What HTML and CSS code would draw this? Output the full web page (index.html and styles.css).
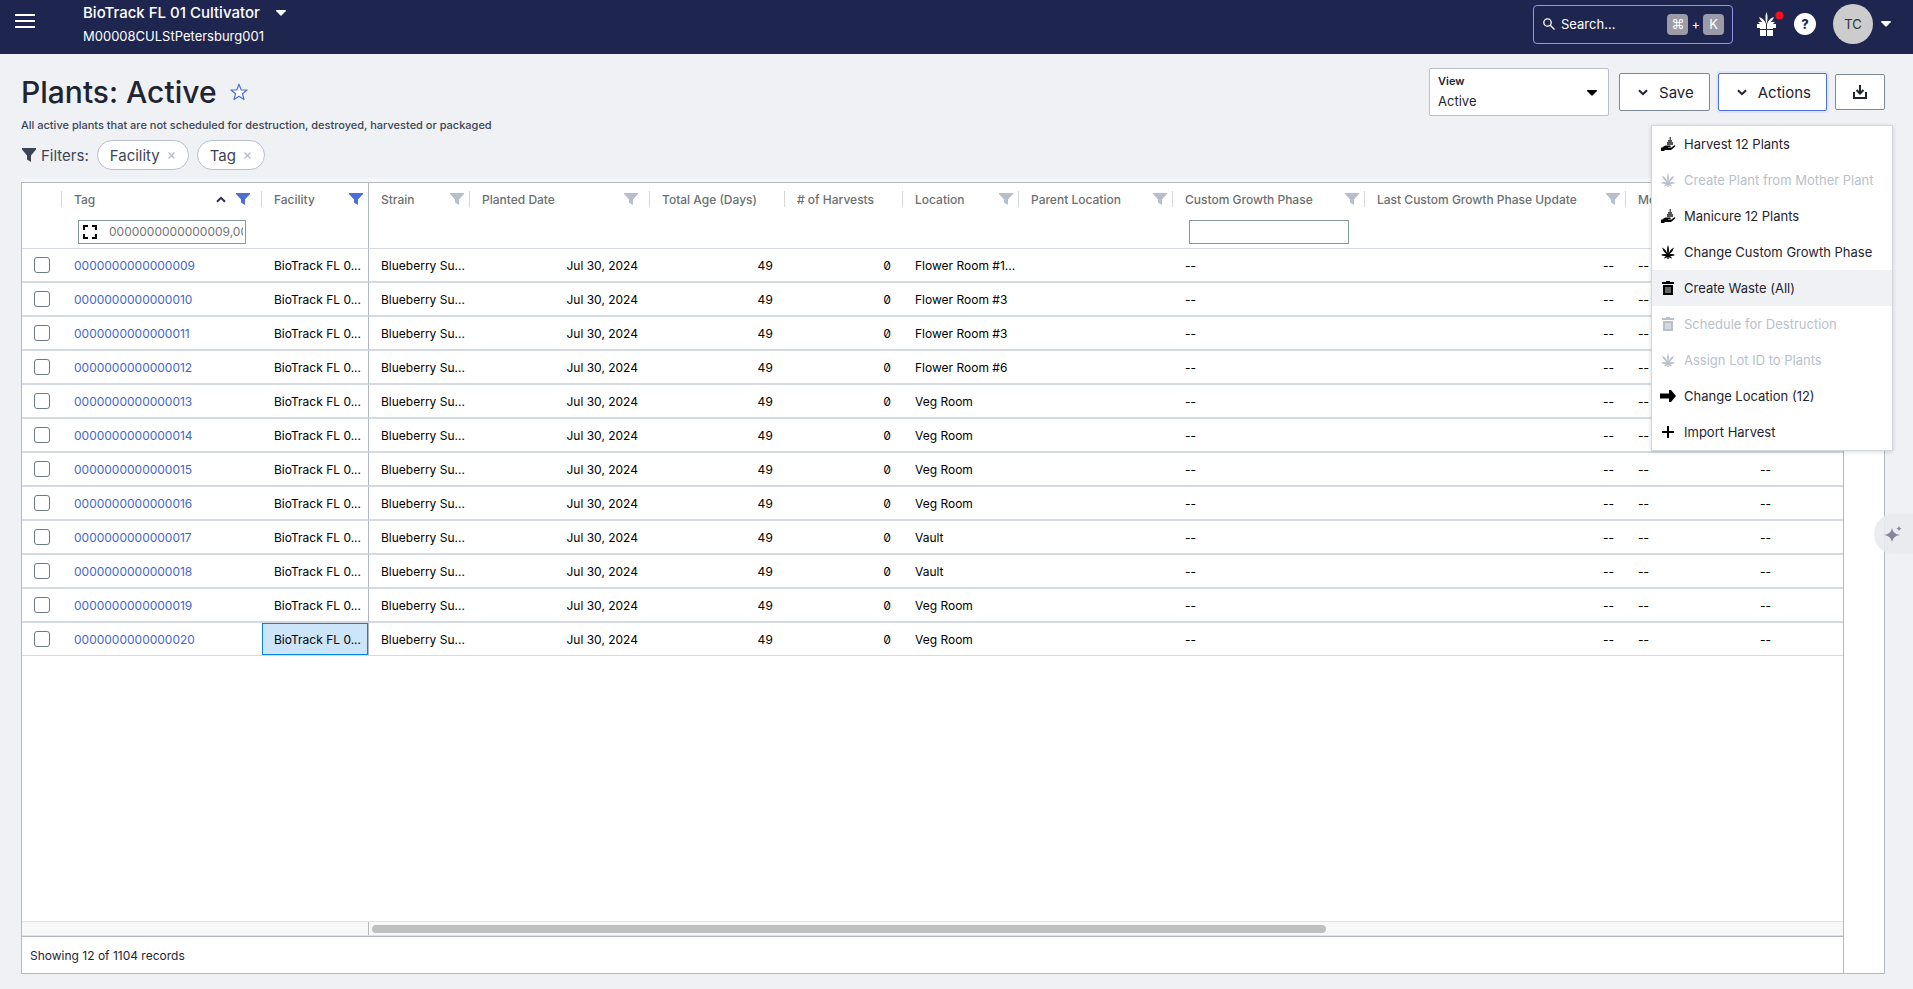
FILE: index.html
```html
<!DOCTYPE html>
<html lang="en">
<head>
    <meta charset="UTF-8">
    <meta name="viewport" content="width=device-width, initial-scale=1.0">
    <title>Plants: Active</title>
    <link rel="stylesheet" href="styles.css">
</head>
<body>
    <!-- shared icons -->
    <svg class="sprite" width="0" height="0" aria-hidden="true">
        <symbol id="i-caret" viewBox="0 0 10 6"><path d="M.5 0h9q.8.4.1 1.2L5.8 5.3q-.8.8-1.6 0L.4 1.2Q-.3.4.5 0z"/></symbol>
        <symbol id="i-chevron" viewBox="0 0 10 7"><path d="M1 1.2 5 5.2 9 1.2" fill="none" stroke="currentColor" stroke-width="2"/></symbol>
        <symbol id="i-filter" viewBox="0 0 14 12"><path d="M0 0h14v1L9 6.500V12L5 9.500V6.500L0 1z"/></symbol>
        <symbol id="i-hand" viewBox="0 0 16 16"><path d="M9.500 1h1.500v3h1v2h1v3H7V6h1V4h1.500z" fill="#555"/><path d="M1 11.500h1.500C4 10 5 9.500 6.500 9.500H10c1 0 1 1.500 0 1.500H8v.6h3.500L14 9.500c1-.7 1.700.3 1 1.100l-3 2.700c-.5.5-1 .7-1.700.7H5l-1 1H1z"/></symbol>
        <symbol id="i-leaf" viewBox="0 0 16 16"><path d="M8 1q1.600 3.500.6 8.500Q10.500 5 14 3.500 13 8 9.500 10.300q3-1 5.500.7-2.500 1.600-5 .9 1.500.9 1.900 2.600-2-.2-3.200-1.600V15H7.300v-2.100Q6 14.300 4.100 14.500q.4-1.700 1.900-2.600-2.500.7-5-.9 2.500-1.700 5.500-.7Q3 8 2 3.500 5.500 5 7.400 9.500 6.400 4.500 8 1z"/></symbol>
        <symbol id="i-trash" viewBox="0 0 16 16"><path d="M2 2h4V1h4v1h4v2H2zM3 5h10v10H3z"/><path d="M6 7v6M8 7v6M10 7v6" stroke="#fff" stroke-width=".8"/></symbol>
        <symbol id="i-arrow" viewBox="0 0 16 16"><path d="M0 5.500h9V2h2l5 6-5 6H9v-3.500H0z"/></symbol>
        <symbol id="i-plus" viewBox="0 0 16 16"><path d="M7 2h2v5h5v2H9v5H7V9H2V7h5z"/></symbol>
    </svg>

    <header class="topbar">
        <button class="icon-btn burger" aria-label="Menu"><svg width="20" height="14" viewBox="0 0 20 14"><path d="M0 1h20M0 7h20M0 13h20" stroke="#fff" stroke-width="2"/></svg></button>
        <div class="org">
            <button class="org-name">BioTrack FL 01 Cultivator <svg width="10" height="6"><use href="#i-caret"/></svg></button>
            <div class="org-id">M00008CULStPetersburg001</div>
        </div>
        <div class="search">
            <svg width="12" height="12" viewBox="0 0 12 12"><g fill="none" stroke="#fff" stroke-width="1.300"><circle cx="4.500" cy="4.500" r="3.700"/><path d="M7.200 7.200 11.500 11.500"/></g></svg>
            <input type="text" placeholder="Search..." aria-label="Search">
            <kbd>⌘</kbd><span>+</span><kbd>K</kbd>
        </div>
        <button class="icon-btn gift" aria-label="What's new">
            <svg width="27" height="26" viewBox="0 0 27 26">
                <g fill="#fff"><path d="M0 13h19v4H0zM3 19h6v6H3zM10 19h6v6h-6zM3 17h13v1H3z"/><path d="M9.500 1q2 5 0 12-2-7 0-12zM2 6q5 1.500 7 7-5.500-2-7-7zM17 6q-5 1.500-7 7 5.500-2 7-7zM1 11q4-1 8 2H3z M18 11q-4-1-8 2h6z"/></g>
                <path d="M9.500 13v12" stroke="#1e2650" stroke-width="1"/>
                <circle cx="22.500" cy="4.500" r="4" fill="#f8101c"/>
            </svg>
        </button>
        <button class="icon-btn help" aria-label="Help">?</button>
        <button class="icon-btn account"><span class="avatar">TC</span><svg width="10" height="6"><use href="#i-caret"/></svg></button>
    </header>

    <main>
        <div class="page-head">
            <div class="heading">
                <div class="title-row">
                    <h1>Plants: Active</h1>
                    <button class="icon-btn" aria-label="Favorite"><svg width="18" height="18" viewBox="0 0 18 18"><path d="M9 1.200 11.100 6.800 17 7 12.400 10.700 14 16.500 9 13.200 4 16.500 5.600 10.700 1 7 6.900 6.800z" fill="#fff" stroke="#4a6fd8" stroke-width="1.200" stroke-linejoin="round"/></svg></button>
                </div>
                <p class="desc">All active plants that are not scheduled for destruction, destroyed, harvested or packaged</p>
                <div class="filters">
                    <svg width="14" height="14" viewBox="0 0 14 14"><path d="M0 0h14v1.500L9 7.500V14l-4-2.500v-4L0 1.500z"/></svg>
                    <span class="filters-label">Filters:</span>
                    <button class="pill">Facility <svg width="7" height="7" viewBox="0 0 7 7"><path d="M.5.5l6 6M6.500.5l-6 6" stroke="#b5bcc8" stroke-width="1.300"/></svg></button>
                    <button class="pill">Tag <svg width="7" height="7" viewBox="0 0 7 7"><path d="M.5.5l6 6M6.500.5l-6 6" stroke="#b5bcc8" stroke-width="1.300"/></svg></button>
                </div>
            </div>
            <div class="tools">
                <div class="view">
                    <label for="view">View</label>
                    <select id="view"><option>Active</option></select>
                    <svg width="10" height="6"><use href="#i-caret"/></svg>
                </div>
                <button class="btn save"><svg width="10" height="7"><use href="#i-chevron"/></svg>Save</button>
                <div class="actions">
                    <button class="btn open"><svg width="10" height="7"><use href="#i-chevron"/></svg>Actions</button>
                    <div class="menu">
                        <button><svg><use href="#i-hand"/></svg>Harvest 12 Plants</button>
                        <button disabled><svg><use href="#i-leaf"/></svg>Create Plant from Mother Plant</button>
                        <button><svg><use href="#i-hand"/></svg>Manicure 12 Plants</button>
                        <button><svg><use href="#i-leaf"/></svg>Change Custom Growth Phase</button>
                        <button class="active"><svg><use href="#i-trash"/></svg>Create Waste (All)</button>
                        <button disabled><svg><use href="#i-trash"/></svg>Schedule for Destruction</button>
                        <button disabled><svg><use href="#i-leaf"/></svg>Assign Lot ID to Plants</button>
                        <button><svg><use href="#i-arrow"/></svg>Change Location (12)</button>
                        <button><svg><use href="#i-plus"/></svg>Import Harvest</button>
                    </div>
                </div>
                <button class="btn download" aria-label="Download"><svg width="16" height="16" viewBox="0 0 16 16"><path d="M2 8v6h12V8M8 1v8M4.500 6 8 9.500 11.500 6" fill="none" stroke="#1f2430" stroke-width="2"/></svg></button>
            </div>
        </div>

        <section class="panel">
            <div class="grid">
                <div class="grid-view">
                    <table>
                        <thead>
                            <tr class="names">
                                <th class="c-check"></th>
                                <th class="c-tag"><div class="head wide"><span>Tag</span><svg class="sort" width="10" height="7"><use href="#i-chevron"/></svg><svg class="on" width="14" height="12"><use href="#i-filter"/></svg></div></th>
                                <th class="c-facility pin"><div class="head"><span>Facility</span><svg class="on" width="14" height="12"><use href="#i-filter"/></svg></div></th>
                                <th class="c-strain"><div class="head"><span>Strain</span><svg width="14" height="12"><use href="#i-filter"/></svg></div></th>
                                <th class="c-planted"><div class="head wide"><span>Planted Date</span><svg width="14" height="12"><use href="#i-filter"/></svg></div></th>
                                <th class="c-age"><div class="head"><span>Total Age (Days)</span></div></th>
                                <th class="c-harvests"><div class="head"><span># of Harvests</span></div></th>
                                <th class="c-location"><div class="head"><span>Location</span><svg width="14" height="12"><use href="#i-filter"/></svg></div></th>
                                <th class="c-parent"><div class="head"><span>Parent Location</span><svg width="14" height="12"><use href="#i-filter"/></svg></div></th>
                                <th class="c-phase"><div class="head"><span>Custom Growth Phase</span><svg width="14" height="12"><use href="#i-filter"/></svg></div></th>
                                <th class="c-update"><div class="head"><span>Last Custom Growth Phase Update</span><svg width="14" height="12"><use href="#i-filter"/></svg></div></th>
                                <th class="c-mother"><div class="head"><span>Mother</span></div></th>
                                <th class="c-last"></th>
                            </tr>
                            <tr class="inputs">
                                <td></td>
                                <td><div class="filter-box">
                                    <svg width="14" height="14" viewBox="0 0 14 14"><path d="M1 5V1h4M9 1h4v4M13 9v4H9M5 13H1V9" fill="none" stroke="#000" stroke-width="2"/></svg>
                                    <input type="text" aria-label="Tag filter" placeholder="0000000000000009,0000000000000010">
                                </div></td>
                                <td class="pin"></td>
                                <td></td><td></td><td></td><td></td><td></td><td></td>
                                <td><div class="filter-box"><input type="text" aria-label="Custom Growth Phase filter"></div></td>
                                <td></td><td></td><td></td>
                            </tr>
                        </thead>
                        <tbody id="rows"></tbody>
                    </table>
                </div>
                <div class="scroll"><div class="scroll-pin"></div><div class="scroll-track"><div class="thumb"></div></div></div>
                <div class="status">Showing 12 of 1104 records</div>
            </div>
        </section>
    </main>

    <button class="assist" aria-label="Assistant"><svg width="20" height="20" viewBox="0 0 20 20"><path d="M9 3q1 6 8 7-7 1-8 7-1-6-8-7 7-1 8-7zM16 1q.5 2 2.500 2.500Q16.500 4 16 6q-.5-2-2.500-2.500Q15.500 3 16 1z"/></svg></button>

    <script>
        // [location, last column]
        const plants = [
            ['Flower Room #1...', ''],
            ['Flower Room #3', ''],
            ['Flower Room #3', ''],
            ['Flower Room #6', ''],
            ['Veg Room', ''],
            ['Veg Room', ''],
            ['Veg Room', '--'],
            ['Veg Room', '--'],
            ['Vault', '--'],
            ['Vault', '--'],
            ['Veg Room', '--'],
            ['Veg Room', '--']
        ];
        const rows = document.getElementById('rows');

        plants.forEach(([location, last], i) => {
            const tag = String(i + 9).padStart(16, '0');
            const selected = i === plants.length - 1 ? ' selected' : '';
            rows.insertAdjacentHTML('beforeend', `
                <tr>
                    <td class="check"><input type="checkbox" aria-label="Select ${tag}"></td>
                    <td><a href="#">${tag}</a></td>
                    <td class="pin${selected}">BioTrack FL 0...</td>
                    <td>Blueberry Su...</td>
                    <td class="num">Jul 30, 2024</td>
                    <td class="num mono">49</td>
                    <td class="num mono">0</td>
                    <td>${location}</td>
                    <td></td>
                    <td>--</td>
                    <td class="num">--</td>
                    <td>--</td>
                    <td>${last}</td>
                </tr>`);
        });
    </script>
</body>
</html>
```
FILE: styles.css
```css
* {
    box-sizing: border-box;
}
body {
    margin: 0;
    height: 100vh;
    display: flex;
    flex-direction: column;
    background: #eff1f5;
    color: #1f2430;
    font-family: Inter, "Liberation Sans", sans-serif;
    font-size: 13px;
    overflow: hidden;
}
button, input, select {
    font: inherit;
    color: inherit;
}
button {
    cursor: pointer;
}
svg {
    flex: none;
    fill: currentColor;
}
.sprite {
    position: absolute;
}
.icon-btn {
    display: flex;
    align-items: center;
    padding: 0;
    border: 0;
    background: none;
}

/* top bar */
.topbar {
    display: flex;
    align-items: center;
    height: 54px;
    flex: none;
    padding: 0 22px 6px 15px;
    background: #1e2650;
    color: #fff;
}
.burger {
    margin-right: 48px;
    padding-bottom: 6px;
}
.org {
    margin-right: auto;
}
.org-name {
    display: flex;
    align-items: center;
    gap: 16px;
    padding: 0;
    border: 0;
    background: none;
    font-size: 15px;
    font-weight: 500;
    line-height: 24px;
}
.org-id {
    line-height: 22px;
}
.search {
    display: flex;
    align-items: center;
    gap: 3px;
    width: 200px;
    height: 39px;
    padding: 0 8px 0 9px;
    border: 1px solid #9297ee;
    border-radius: 4px;
}
.search input {
    flex: 1;
    min-width: 0;
    padding: 0 0 0 3px;
    border: 0;
    outline: 0;
    background: none;
}
.search input::placeholder {
    color: #fff;
    opacity: 1;
}
kbd {
    width: 21px;
    height: 21px;
    border-radius: 4px;
    background: #9c9ca8;
    font-family: Inter, "DejaVu Sans", sans-serif;
    line-height: 21px;
    text-align: center;
}
.gift {
    margin-left: 24px;
}
.help {
    justify-content: center;
    width: 22px;
    height: 22px;
    margin-left: 10px;
    border-radius: 50%;
    background: #fff;
    color: #1e2650;
    font-weight: 800;
}
.account {
    gap: 8px;
    margin-left: 17px;
}
.avatar {
    width: 40px;
    height: 40px;
    border-radius: 50%;
    background: #ccc;
    color: #333;
    line-height: 40px;
}

/* page heading */
main {
    flex: 1;
    min-height: 0;
    display: flex;
    flex-direction: column;
    padding: 14px 28px 15px 21px;
}
.page-head {
    display: flex;
    justify-content: space-between;
    margin-bottom: 12px;
}
.title-row {
    display: flex;
    align-items: center;
    gap: 13px;
    height: 48px;
}
h1 {
    margin: 0;
    font-size: 30px;
    font-weight: 500;
}
.desc {
    margin: 0;
    color: #3c4454;
    font-size: 11px;
    font-weight: 500;
    line-height: 18px;
}
.filters {
    display: flex;
    align-items: center;
    gap: 8px;
    margin-top: 6px;
    padding-left: 1px;
    color: #3c4454;
    font-size: 15px;
}
.filters-label {
    margin-left: -3px;
}
.pill {
    display: flex;
    align-items: center;
    gap: 8px;
    height: 30px;
    padding: 0 13px 0 12px;
    border: 1px solid #b9c0cc;
    border-radius: 15px;
    background: #fff;
}
.tools {
    display: flex;
    align-items: center;
    align-self: flex-start;
    height: 48px;
}
.view {
    position: relative;
    display: flex;
    flex-direction: column;
    width: 180px;
    height: 48px;
    margin-right: 10px;
    border: 1px solid #b9c0cc;
    border-radius: 2px;
    background: #fff;
}
.view label {
    padding: 5px 8px 0;
    font-size: 11px;
    font-weight: 600;
    line-height: 14px;
}
.view select {
    flex: 1;
    padding: 0 8px 2px;
    border: 0;
    background: none;
    appearance: none;
}
.view svg {
    position: absolute;
    top: 21px;
    right: 11px;
    color: #000;
    pointer-events: none;
}
.btn {
    display: flex;
    align-items: center;
    justify-content: center;
    gap: 11px;
    height: 38px;
    padding: 0 15px 0 18px;
    border: 1px solid #7d8a96;
    border-radius: 2px;
    background: #fff;
    font-size: 15px;
}
.btn.open {
    border-color: #4a6fd8;
    box-shadow: 0 0 0 2px #e2e6fa;
}
.actions {
    position: relative;
    margin: 0 8px;
}
.btn.download {
    width: 50px;
    height: 36px;
    padding: 0;
}
.menu {
    position: absolute;
    z-index: 2;
    top: 52px;
    right: -66px;
    width: 242px;
    border: 1px solid #d3d7df;
    background: #fff;
    box-shadow: 0 1px 4px rgba(0, 0, 0, .15);
}
.menu button {
    display: flex;
    align-items: center;
    gap: 8px;
    width: 100%;
    height: 36px;
    padding: 0 8px;
    border: 0;
    background: none;
    white-space: nowrap;
}
.menu svg {
    width: 16px;
    height: 16px;
    color: #000;
}
.menu .active {
    background: #eff1f5;
}
.menu button:disabled,
.menu button:disabled svg {
    color: #b9bfcb;
}

/* grid */
.panel {
    flex: 1;
    min-height: 0;
    display: flex;
    padding-right: 40px;
    border: 1px solid #b3b9be;
    background: #fff;
    box-shadow: 0 -4px #f6f7fa;
}
.grid {
    flex: 1;
    min-width: 0;
    display: flex;
    flex-direction: column;
    border-right: 1px solid #b3b9be;
}
.grid-view {
    flex: 1;
    min-height: 0;
    overflow: hidden;
}
table {
    table-layout: fixed;
    width: 1926px;
    border-spacing: 0;
    font-size: 12px;
}
.c-check { width: 40px; }
.c-tag { width: 200px; }
.c-facility { width: 107px; }
.c-strain { width: 101px; }
.c-planted { width: 180px; }
.c-age { width: 135px; }
.c-harvests { width: 118px; }
.c-location { width: 116px; }
.c-parent { width: 154px; }
.c-phase { width: 192px; }
.c-update { width: 261px; }
.c-mother { width: 122px; }
.c-last { width: 200px; }
th {
    height: 32px;
    padding: 0;
    color: #6c6f72;
    font-weight: 500;
    text-align: left;
    white-space: nowrap;
    background: linear-gradient(#d3d7dc, #d3d7dc) right center / 1px 16px no-repeat;
}
.head {
    display: flex;
    align-items: center;
    padding: 0 6px 0 12px;
}
.head.wide {
    padding-right: 12px;
}
.pin .head {
    padding-right: 5px;
}
.head span {
    flex: 1;
}
.head svg {
    color: #b8bfcc;
}
.head .on {
    color: #4a6fd8;
}
.head .sort {
    margin-right: 10px;
    color: #2b3240;
    transform: rotate(180deg);
}
th.pin {
    background: none;
}
.inputs td {
    height: 34px;
    padding: 0 16px;
    border-bottom: 1px solid #d5d9e1;
}
.filter-box {
    display: flex;
    align-items: center;
    height: 24px;
    padding: 0 2px 0 4px;
    border: 1px solid #84979a;
    color: #757575;
}
.filter-box input {
    flex: 1;
    min-width: 0;
    padding: 0;
    border: 0;
    outline: 0;
    background: none;
}
.filter-box svg {
    margin-right: 12px;
}
.filter-box input::placeholder {
    color: #757575;
}
tbody td {
    height: 34px;
    padding: 0 12px;
    border-bottom: 2px solid #d5d9e1;
    color: #000;
    white-space: nowrap;
}
tbody tr:last-child td {
    height: 33px;
    border-bottom-width: 1px;
}
table .pin {
    border-right: 1px solid #b3b9be;
}
tbody .selected {
    background: #cce5f8;
    box-shadow: inset 0 0 0 1px #0a84d8;
}
tbody .check {
    padding: 0 0 0 12px;
}
.check input {
    display: block;
    width: 16px;
    height: 16px;
    margin: 0;
    border: 1px solid #6c7c80;
    border-radius: 3px;
    background: #fff;
    appearance: none;
}
td a {
    color: #4466d0;
    text-decoration: none;
}
.num {
    text-align: right;
}
.mono {
    font-variant-numeric: tabular-nums slashed-zero;
}
.scroll {
    display: flex;
    height: 15px;
    border-top: 1px solid #e2e3e4;
    border-bottom: 1px solid #e2e3e4;
    background: #f8f8f8;
}
.scroll-pin {
    width: 347px;
    border-right: 1px solid #b3b9be;
}
.scroll-track {
    flex: 1;
    padding: 3px;
}
.thumb {
    width: 65%;
    height: 8px;
    border-radius: 4px;
    background: #bfbfbf;
}
.status {
    height: 37px;
    padding-left: 8px;
    border-top: 1px solid #b3b9be;
    font-size: 12px;
    line-height: 37px;
}
.assist {
    position: fixed;
    top: 514px;
    right: 0;
    width: 39px;
    height: 40px;
    padding: 4px 0 0 9px;
    border: 0;
    border-radius: 20px 0 0 20px;
    background: rgba(233, 234, 238, .9);
    color: #85869a;
    text-align: left;
}
```
